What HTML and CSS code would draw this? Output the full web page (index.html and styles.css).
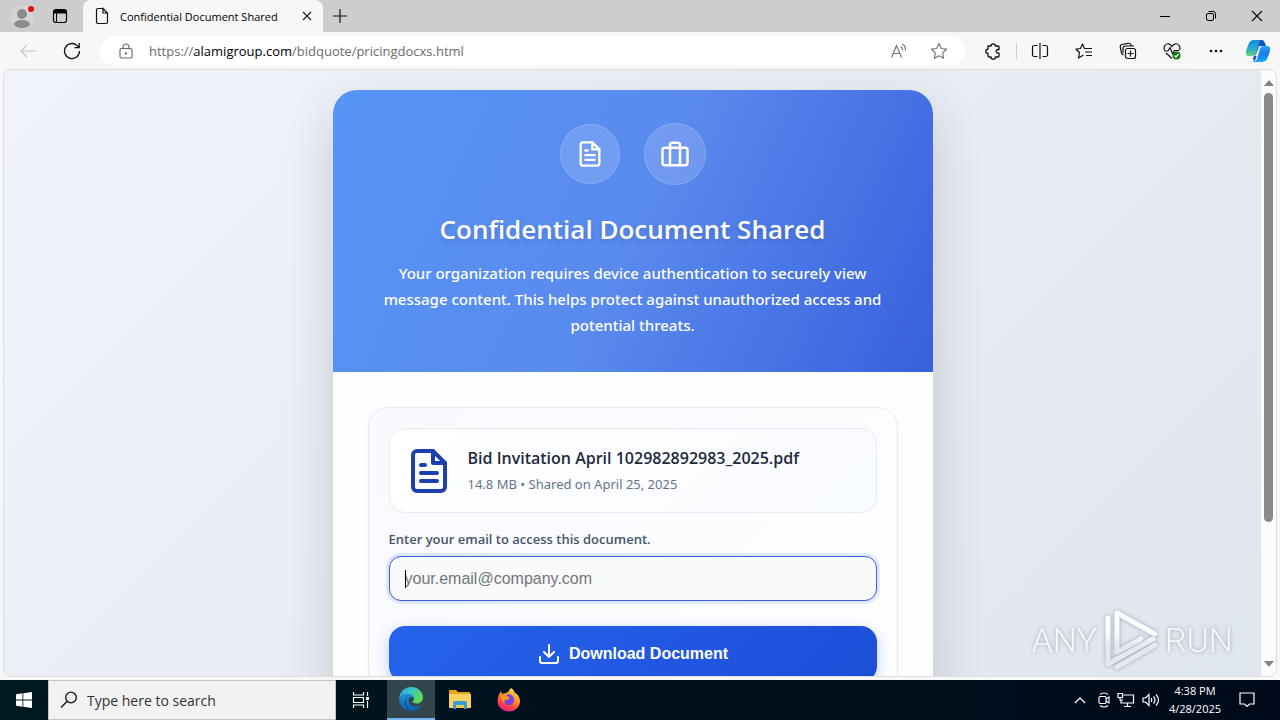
FILE: index.html
```html
<!DOCTYPE html>
<html lang="en">
<head>
    <meta charset="UTF-8">
    <meta name="viewport" content="width=device-width, initial-scale=1.0">
    <title>Confidential Document Shared</title>
    <link rel="stylesheet" href="styles.css">
</head>
<body>
    <header class="tabbar">
        <button class="profile" aria-label="Profile">
            <svg width="24" height="28" viewBox="0 0 24 28"><circle cx="12" cy="15" r="12" fill="#d4d4d4"/><circle cx="12" cy="12" r="5" fill="#8c8c8c"/><ellipse cx="12" cy="22" rx="8" ry="4" fill="#8c8c8c"/><circle cx="21" cy="7" r="3" fill="#e00b1c"/></svg>
        </button>
        <button class="tab-actions" aria-label="Tab actions">
            <svg width="16" height="16" viewBox="0 0 16 16"><rect x="1.5" y="1.5" width="13" height="13" rx="2.5" fill="none" stroke="#000" stroke-width="1.2"/><path d="M1.5 5.500V4q0-2.500 2.500-2.500h8q2.500 0 2.500 2.500v1.500z" fill="#000"/><path d="M4.500 5v9" stroke="#000"/></svg>
        </button>
        <div class="tab">
            <svg width="14" height="18" viewBox="0 0 14 18" fill="none" stroke="#111" stroke-width="1.2"><path d="M8 1.500H3q-1.500 0-1.500 1.500v12q0 1.500 1.500 1.500h8q1.500 0 1.500-1.500V6L8 1.500V6h4.500"/></svg>
            <span class="tab-title">Confidential Document Shared</span>
            <button class="tab-close" aria-label="Close tab"><svg width="10" height="10" viewBox="0 0 10 10" stroke="#222" stroke-width="1.2"><path d="M1 1l8 8M9 1L1 9"/></svg></button>
        </div>
        <button class="new-tab" aria-label="New tab"><svg width="14" height="14" viewBox="0 0 14 14" stroke="#111" stroke-width="1.2"><path d="M7 0v14M0 7h14"/></svg></button>
        <div class="window-buttons">
            <button aria-label="Minimize"><svg width="12" height="12" viewBox="0 0 12 12" stroke="#000"><path d="M1 6.500h10"/></svg></button>
            <button aria-label="Restore"><svg width="12" height="12" viewBox="0 0 12 12" fill="none" stroke="#000"><rect x="1.500" y="3.500" width="7" height="7" rx="1.500"/><path d="M3.500 1.500H8q2.500 0 2.500 2.500v4.500"/></svg></button>
            <button aria-label="Close"><svg width="12" height="12" viewBox="0 0 12 12" stroke="#000" stroke-width="1.1"><path d="M1 1l10 10M11 1L1 11"/></svg></button>
        </div>
    </header>

    <nav class="toolbar">
        <button class="tool" aria-label="Back"><svg width="18" height="16" viewBox="0 0 18 16" fill="none" stroke="#c6c6c6" stroke-width="1.2"><path d="M17 8H2M8 2L2 8l6 6"/></svg></button>
        <button class="tool" aria-label="Refresh"><svg width="18" height="18" viewBox="0 0 18 18" fill="none" stroke="#111" stroke-width="1.300"><path d="M16.500 9a7.500 7.500 0 1 1-2.300-5.400L16 5.500M16.200 1v4.700h-4.700"/></svg></button>
        <div class="address">
            <svg width="14" height="16" viewBox="0 0 14 16" fill="none" stroke="#666" stroke-width="1.100"><rect x="1" y="5.500" width="12" height="9.500" rx="1.500"/><path d="M4 5.500V4a3 3 0 0 1 6 0v1.500"/><circle cx="7" cy="10.500" r=".6" fill="#666"/></svg>
            <span class="url">https://<b>alamigroup.com</b>/bidquote/pricingdocxs.html</span>
            <button class="tool" aria-label="Read aloud"><svg width="18" height="16" viewBox="0 0 18 16" fill="none" stroke="#777" stroke-width="1.200"><path d="M1.500 14.500L6.500 2.500l5 12M3.500 10.500h6M10.500 3.500q2 1 2 3.500M12 1q4 2 3.500 6.500"/></svg></button>
            <button class="tool" aria-label="Favorite"><svg width="18" height="18" viewBox="0 0 18 18" fill="none" stroke="#777" stroke-width="1.200" stroke-linejoin="round"><path d="M9 1.500l2.300 5 5.200.7-3.800 3.700.9 5.400L9 13.800l-4.600 2.500.9-5.400L1.500 7.200l5.200-.7z"/></svg></button>
        </div>
        <div class="tools">
            <button class="tool" aria-label="Extensions"><svg width="18" height="18" viewBox="0 0 18 18" fill="none" stroke="#111" stroke-width="1.300" stroke-linejoin="round"><path d="M4 4h3a2.200 2.200 0 0 1 4.400 0H14q1 0 1 1v2.500h-1a1.800 1.800 0 0 0 0 3.600h1V14q0 1-1 1h-2.600a2.200 2.200 0 0 1-4.400 0H5q-1 0-1-1v-2.500a2.200 2.200 0 0 1 0-4.400z"/></svg></button>
            <span class="divider"></span>
            <button class="tool" aria-label="Split screen"><svg width="18" height="18" viewBox="0 0 18 18" fill="none" stroke="#111" stroke-width="1.200"><path d="M9 1v16M6.500 3.500h-3Q1.500 3.500 1.500 5v8q0 1.500 2 1.500h3M11.500 3.500h3q2 0 2 1.500v8q0 1.500-2 1.500h-3"/></svg></button>
            <button class="tool" aria-label="Favorites"><svg width="18" height="18" viewBox="0 0 18 18" fill="none" stroke="#111" stroke-width="1.200" stroke-linejoin="round"><path d="M11 6.500H9.500L7.500 2l-2 4.500-4.500.7 3.500 3.300-1 5.500 5-3M11 6.500h6M10 10h7M11 13.500h6"/></svg></button>
            <button class="tool" aria-label="Collections"><svg width="18" height="18" viewBox="0 0 18 18" fill="none" stroke="#111" stroke-width="1.200"><rect x="6.500" y="6.500" width="10" height="10" rx="2"/><path d="M11.500 8.500v6M8.500 11.500h6M4.500 13Q3 12.500 2.500 11L1.200 5Q1 3 3 2.500l6-1.200Q11.500 1 12 3l.3 1M4 11V6.500Q4 4 6.500 4H15"/></svg></button>
            <button class="tool" aria-label="Browser essentials"><svg width="18" height="18" viewBox="0 0 18 18" fill="none" stroke="#111" stroke-width="1.200"><path d="M1.500 8C0 4 3 1.500 5.500 1.800 7.500 2 8.500 3.500 9 4.500c.5-1 1.500-2.500 3.500-2.700C15 1.500 18 4 16.500 8M3 11l6 5.500M1 9h4l2-3.500 2.500 6L11.500 8.500H16"/><circle cx="13.500" cy="13.500" r="4" fill="#107c10" stroke="none"/><path d="M11.500 13.500l1.500 1.500 2.500-3" stroke="#fff"/></svg></button>
            <button class="tool" aria-label="Settings and more"><svg width="18" height="18" viewBox="0 0 18 18" fill="#111"><circle cx="4" cy="9" r="1.300"/><circle cx="9" cy="9" r="1.300"/><circle cx="14" cy="9" r="1.300"/></svg></button>
            <button class="tool copilot" aria-label="Copilot">
                <svg width="26" height="24" viewBox="0 0 26 24">
                    <defs>
                        <linearGradient id="cpa" x1="0" y1="0" x2="0" y2="1"><stop offset="0" stop-color="#1689d8"/><stop offset=".5" stop-color="#28a9d4"/><stop offset="1" stop-color="#66d37c"/></linearGradient>
                        <linearGradient id="cpb" x1="0" y1="0" x2="0" y2="1"><stop offset="0" stop-color="#2aa3f5"/><stop offset=".5" stop-color="#1d7bea"/><stop offset="1" stop-color="#17a9ee"/></linearGradient>
                    </defs>
                    <path d="M13 1h4q2 0 3 3l1 3h-4q-2 0-3 3l-3 9q-1 4-4 4h4q-2 0-3-3z" fill="#1555c0"/>
                    <path d="M9 1h8q-2 0-3 3l-3 10q-1 3-4 3H4q-4 0-3-5l2.500-7Q5 1 9 1z" fill="url(#cpa)"/>
                    <path d="M17 23H9q2 0 3-3l3-10q1-3 4-3h3q4 0 3 5l-2.500 7Q21 23 17 23z" fill="url(#cpb)"/>
                    <path d="M14 7h3q-2 0-3 3l-2 7H9q2-1 3-4z" fill="#eef9ff"/>
                </svg>
            </button>
        </div>
    </nav>

    <div class="viewport">
        <main class="page">
            <section class="card">
                <div class="card-header">
                    <div class="header-icons">
                        <span class="circle"><svg width="28" height="28" viewBox="0 0 24 24"><use href="#file"/></svg></span>
                        <span class="circle circle-big"><svg width="30" height="30" viewBox="0 0 24 24"><rect x="2" y="7" width="20" height="14" rx="2"/><path d="M16 21V5a2 2 0 0 0-2-2h-4a2 2 0 0 0-2 2v16"/></svg></span>
                    </div>
                    <h1>Confidential Document Shared</h1>
                    <p>Your organization requires device authentication to securely view message content. This helps protect against unauthorized access and potential threats.</p>
                </div>
                <div class="card-body">
                    <form class="access-form">
                        <div class="file">
                            <svg class="file-icon" width="48" height="48" viewBox="0 0 24 24"><g id="file"><path d="M14 2H6a2 2 0 0 0-2 2v16a2 2 0 0 0 2 2h12a2 2 0 0 0 2-2V8z"/><path d="M14 2v6h6M16 13H8M16 17H8M10 9H8"/></g></svg>
                            <div>
                                <div class="file-name">Bid Invitation April 102982892983_2025.pdf</div>
                                <div class="file-meta">14.8 MB • Shared on April 25, 2025</div>
                            </div>
                        </div>
                        <label for="email">Enter your email to access this document.</label>
                        <div class="field">
                            <input type="email" id="email" placeholder="your.email@company.com">
                        </div>
                        <button class="download" type="button">
                            <svg width="24" height="24" viewBox="0 0 24 24"><path d="M21 15v4a2 2 0 0 1-2 2H5a2 2 0 0 1-2-2v-4M7 10l5 5 5-5M12 15V3"/></svg>
                            Download Document
                        </button>
                    </form>
                </div>
            </section>
        </main>
        <div class="scrollbar">
            <svg width="10" height="6" viewBox="0 0 10 6" fill="#858585"><path d="M5 0l5 6H0z"/></svg>
            <div class="thumb"></div>
            <svg width="10" height="6" viewBox="0 0 10 6" fill="#858585"><path d="M0 0h10L5 6z"/></svg>
        </div>
        <div class="watermark">
            <span>ANY</span>
            <svg width="56" height="64" viewBox="0 0 56 64" fill="none" stroke="url(#wm)" stroke-width="5" stroke-linecap="round" stroke-linejoin="round">
                <defs>
                    <linearGradient id="wm" gradientUnits="userSpaceOnUse" x1="0" y1="0" x2="0" y2="64"><stop offset=".4" stop-color="#fafcff"/><stop offset=".6" stop-color="#e4e8ef"/></linearGradient>
                </defs>
                <path d="M14 44V5l38 21M5 10v46l45-25M14 59l38-22M14 44l24-13"/>
            </svg>
            <span>RUN</span>
        </div>
    </div>

    <footer class="taskbar">
        <button class="start" aria-label="Start"><svg width="16" height="16" viewBox="0 0 16 16" fill="#fff"><path d="M0 2.200l6.500-.9v6.200H0zM7.300 1.200L16 0v7.500H7.300zM0 8.400h6.500v6.300L0 13.800zM7.300 8.400H16V16l-8.700-1.200z"/></svg></button>
        <div class="search">
            <svg width="18" height="18" viewBox="0 0 18 18" fill="none" stroke="#111" stroke-width="1.300"><circle cx="11" cy="6.500" r="5.300"/><path d="M7.200 10.300L1 16.500"/></svg>
            <input type="text" aria-label="Search" placeholder="Type here to search">
        </div>
        <button class="app" aria-label="Task view"><svg width="18" height="18" viewBox="0 0 18 18" fill="none" stroke="#fff" stroke-width="1.200"><path d="M1.500 1v3h10V1M1.500 17v-3h10v3M1.500 6.500h10v5h-10zM15.500 1v4M15.500 10v7"/><path d="M14 6h3v3h-3z" fill="#fff" stroke="none"/></svg></button>
        <button class="app app-active" aria-label="Edge">
            <svg width="24" height="24" viewBox="0 0 24 24">
                <defs>
                    <linearGradient id="ea" x1="0" y1="0" x2="1" y2=".4"><stop offset="0" stop-color="#2aa5e0"/><stop offset=".5" stop-color="#35c4cf"/><stop offset="1" stop-color="#62d957"/></linearGradient>
                    <linearGradient id="eb" x1="0" y1="0" x2="0" y2="1"><stop offset="0" stop-color="#1f93d8"/><stop offset="1" stop-color="#0d5fae"/></linearGradient>
                </defs>
                <path d="M.2 11C.8 4.500 6 0 12 0c7 0 12 5 12 10.500 0 3.500-2.700 6-6.200 6-3 0-4.300-1-4.300-1.700 0-.6 1.300-1.200 1.300-3.300 0-2.700-2.500-4.500-6-4.500C4.500 7 1.500 8.500.2 11z" fill="url(#ea)"/>
                <path d="M.2 11C1.500 8 5 6.500 8.500 6.700c3.500.2 6 2 6.200 4.300-1-1-2.500-1.300-3.700-.5-2.500 1.800-1.500 6.500 2 8.300 3 1.500 6.500 1 9.200-1C20.500 21.500 16.500 24 12 24 5.500 24-.4 18.500.2 11z" fill="url(#eb)"/>
                <path d="M9 9.500C6 12 6 19 12 24 6 22 3 13 9 9.500z" fill="#0c4d93"/>
            </svg>
        </button>
        <button class="app" aria-label="File Explorer"><svg width="22" height="20" viewBox="0 0 22 20"><path d="M0 1q0-1 1-1h6l2 2h12v4H0z" fill="#e8a317"/><path d="M0 4h22v14H0z" fill="#fbd25e"/><path d="M4 19v-6q0-2 2-2h10q2 0 2 2v6h-3v-4H7v4z" fill="#3b9ad9"/><path d="M7 15h8v3H7z" fill="#f5c548"/></svg></button>
        <button class="app" aria-label="Firefox">
            <svg width="24" height="24" viewBox="0 0 24 24">
                <defs>
                    <linearGradient id="fx" x1=".8" y1="0" x2=".3" y2="1"><stop offset="0" stop-color="#fff04a"/><stop offset=".4" stop-color="#ff9a24"/><stop offset=".7" stop-color="#ff4a3d"/><stop offset="1" stop-color="#e5178f"/></linearGradient>
                </defs>
                <path d="M14 0c2 1 3 3 3.500 4.500C20 5.500 23 9 23 13c0 6-5 10.500-11 10.500S.5 19 .5 13C.5 9 2 6 4 3l1 3c1-.8 2.500-1 4-.8L12 3q.5-2 2-3z" fill="url(#fx)"/>
                <path d="M9 7c3-2 8 0 8 4.500S13 18 10 16.500 6.500 12 9 11l3-1z" fill="#7542e5"/>
                <path d="M4 7q3-1 6 1l3 2q-1 2-4 2t-1 3q-4-1-4-8z" fill="#ff9624"/>
            </svg>
        </button>
        <div class="tray">
            <svg width="12" height="8" viewBox="0 0 12 8" fill="none" stroke="#fff" stroke-width="1.300"><path d="M1 7l5-5 5 5"/></svg>
            <svg class="tray-icon" width="12" height="16" viewBox="0 0 12 16" fill="none" stroke="#fff" stroke-width="1.100"><rect x="1" y="4.500" width="7" height="7" rx="1"/><path d="M8 7l3-2v6L8 9M2 2.500q4-3 8 0M2 13.500q4 3 8 0"/></svg>
            <svg width="18" height="16" viewBox="0 0 18 16" fill="none" stroke="#fff" stroke-width="1.200"><path d="M6.500 3h10v8H4V8M10.500 11v3.500M7 14.500h7M1 1.500h4.500v4H1zM3 5.500V8h3"/></svg>
            <svg width="18" height="14" viewBox="0 0 18 14" fill="none" stroke="#fff" stroke-width="1.200"><path d="M1 5h2.500L7 1.500v11L3.500 9H1zM9 5q1.500 2 0 4M11.500 3.500q3 3.500 0 7M14 1.500q5 5.500 0 11"/></svg>
            <div class="clock">4:38 PM<br>4/28/2025</div>
            <svg class="notify" width="16" height="16" viewBox="0 0 16 16" fill="none" stroke="#fff" stroke-width="1.200"><path d="M1 1h14v11h-4.500L8 14.500 5.500 12H1z"/></svg>
        </div>
    </footer>
</body>
</html>
```
FILE: styles.css
```css
* {
    box-sizing: border-box;
}
body {
    margin: 0;
    height: 100vh;
    display: flex;
    flex-direction: column;
    overflow: hidden;
    font-family: "Open Sans", "Noto Sans", sans-serif;
    background-color: #f7f7f7;
}
button {
    padding: 0;
    border: none;
    background: none;
    display: flex;
    align-items: center;
    justify-content: center;
}
svg {
    flex: none;
}

/* Browser tabs */
.tabbar {
    height: 32px;
    flex: none;
    display: flex;
    align-items: stretch;
    background-color: #cdcdcd;
}
.profile {
    width: 44px;
}
.tab-actions {
    width: 32px;
}
.tab {
    width: 240px;
    margin-left: 7px;
    padding: 0 9px 0 12px;
    display: flex;
    align-items: center;
    background-color: #f7f7f7;
    border-radius: 8px 8px 0 0;
    font-size: 11px;
}
.tab-title {
    flex: 1;
    margin-left: 11px;
    white-space: nowrap;
}
.tab-close {
    width: 14px;
}
.new-tab {
    width: 34px;
}
.window-buttons {
    margin-left: auto;
    display: flex;
}
.window-buttons button {
    width: 46px;
}

/* Toolbar */
.toolbar {
    height: 37px;
    flex: none;
    display: flex;
    align-items: center;
    padding: 0 2px 0 6px;
}
.tool {
    width: 44px;
    height: 32px;
}
.address {
    flex: 1;
    height: 30px;
    margin-left: 6px;
    padding: 0 6px 0 19px;
    display: flex;
    align-items: center;
    background-color: #fff;
    border-radius: 15px;
}
.address .tool {
    width: 40px;
}
.url {
    flex: 1;
    margin-left: 16px;
    font-size: 13px;
    color: #6b6b6b;
}
.url b {
    font-weight: normal;
    color: #000;
}
.tools {
    display: flex;
    align-items: center;
    margin-left: 6px;
}
.divider {
    width: 1px;
    height: 16px;
    margin: 0 1px;
    background-color: #cfcfcf;
}
.copilot {
    width: 40px;
}

/* Page */
.viewport {
    flex: 1;
    min-height: 0;
    position: relative;
    display: flex;
    margin: 0 3px 3px;
    border: 1px solid #dedede;
    border-radius: 8px;
    overflow: hidden;
}
.page {
    flex: 1;
    padding: 20px;
    overflow: hidden;
    background: linear-gradient(135deg, #f0f4fa, #e0e6ee);
}
.card {
    max-width: 600px;
    margin: 0 auto;
    background-color: #fdfeff;
    border-radius: 24px;
    box-shadow: 0 20px 50px rgba(0, 0, 0, 0.16);
}
.card svg {
    fill: none;
    stroke: currentColor;
    stroke-width: 2;
    stroke-linecap: round;
    stroke-linejoin: round;
}
.card-header {
    padding: 33px 40px 34px;
    text-align: center;
    color: #fff;
    background: linear-gradient(115deg, #5695f6, #5a8aee 50%, #3760dd);
    border-radius: 24px 24px 0 0;
}
.header-icons {
    display: flex;
    justify-content: center;
    align-items: center;
    gap: 24px;
}
.circle {
    width: 60px;
    height: 60px;
    display: flex;
    align-items: center;
    justify-content: center;
    background-color: rgba(255, 255, 255, 0.15);
    border: 1px solid rgba(255, 255, 255, 0.15);
    border-radius: 50%;
}
.circle-big {
    width: 62px;
    height: 62px;
}
.card-header h1 {
    margin: 24px 0 11px;
    font-size: 26px;
    font-weight: 600;
    line-height: 40px;
    text-shadow: 0 2px 4px rgba(0, 0, 0, 0.15);
}
.card-header p {
    margin: 0;
    font-family: "Noto Sans", sans-serif;
    font-size: 15px;
    font-weight: 500;
    line-height: 26px;
}
.card-body {
    padding: 35px;
}
.access-form {
    padding: 20px;
    background: linear-gradient(135deg, #f9fafe, #fdfeff);
    border: 1px solid #e6ebf3;
    border-radius: 20px;
    box-shadow: 0 4px 16px rgba(0, 0, 0, 0.02);
}
.file {
    display: flex;
    align-items: center;
    gap: 15px;
    padding: 16px 15px;
    background: linear-gradient(135deg, #fff, #f8fbff);
    border: 1px solid #e6ebf3;
    border-radius: 16px;
}
.file-icon {
    color: #1e40af;
}
.file-name {
    font-size: 16px;
    font-weight: 600;
    line-height: 26px;
    margin-bottom: 2px;
    color: #1e293b;
}
.file-meta {
    font-family: "Noto Sans", sans-serif;
    font-size: 13px;
    line-height: 23px;
    color: #64748b;
}
.access-form label {
    display: block;
    margin: 15px 0 6px;
    font-size: 13px;
    font-weight: 600;
    line-height: 22px;
    color: #475569;
}
.field {
    position: relative;
}
/* text cursor */
.field::before {
    content: "";
    position: absolute;
    left: 16px;
    top: 14px;
    width: 1px;
    height: 18px;
    background-color: #000;
}
.field input {
    display: block;
    width: 100%;
    height: 45px;
    padding: 0 15px;
    font-family: "Liberation Sans", sans-serif;
    font-size: 16px;
    background-color: #f8fafc;
    border: 1px solid #3b5bdb;
    border-radius: 12px;
    box-shadow: 0 0 0 3px rgba(59, 130, 246, 0.15);
    outline: none;
}
.download {
    width: 100%;
    height: 56px;
    margin-top: 25px;
    gap: 8px;
    font-family: "Liberation Sans", sans-serif;
    font-size: 16px;
    font-weight: bold;
    color: #fff;
    background: linear-gradient(135deg, #2563eb, #1d4ed8);
    border-radius: 16px;
    box-shadow: 0 4px 14px rgba(37, 99, 235, 0.3);
}

.scrollbar {
    width: 15px;
    padding: 10px 0 9px;
    display: flex;
    flex-direction: column;
    align-items: center;
    background-color: #fbfbfb;
}
.thumb {
    width: 9px;
    height: 73%;
    margin: 7px 0 auto;
    background-color: #8a8a8a;
    border-radius: 5px;
}

.watermark {
    position: absolute;
    right: 43px;
    bottom: 4px;
    display: flex;
    align-items: center;
    gap: 6px;
    font-family: Roboto, sans-serif;
    font-size: 34px;
    font-weight: 300;
    color: #f4f7fb;
    filter: drop-shadow(0 0 2px rgba(90, 100, 120, 0.5));
}

/* Taskbar */
.taskbar {
    height: 40px;
    flex: none;
    display: flex;
    background: linear-gradient(90deg, #001820, #00101d 50%, #000a1a);
    color: #fff;
}
.start {
    width: 48px;
}
.search {
    width: 288px;
    padding-left: 11px;
    display: flex;
    align-items: center;
    gap: 9px;
    background-color: #f2f2f2;
    border: 1px solid #c4c4c4;
}
.search input {
    flex: 1;
    min-width: 0;
    padding: 0;
    border: none;
    background: none;
    font-family: inherit;
    font-size: 14px;
}
.search input::placeholder {
    color: #333;
}
.app {
    width: 49px;
}
.app-active {
    width: 48px;
    margin-left: 2px;
    background-color: #33464e;
    border-bottom: 2px solid #76b9ed;
}
.tray {
    margin-left: auto;
    padding-right: 25px;
    display: flex;
    align-items: center;
    gap: 7px;
}
.tray-icon {
    margin-left: 5px;
}
.clock {
    width: 56px;
    font-size: 11px;
    line-height: 18px;
    text-align: center;
    white-space: nowrap;
}
.notify {
    margin-left: 9px;
}
```
